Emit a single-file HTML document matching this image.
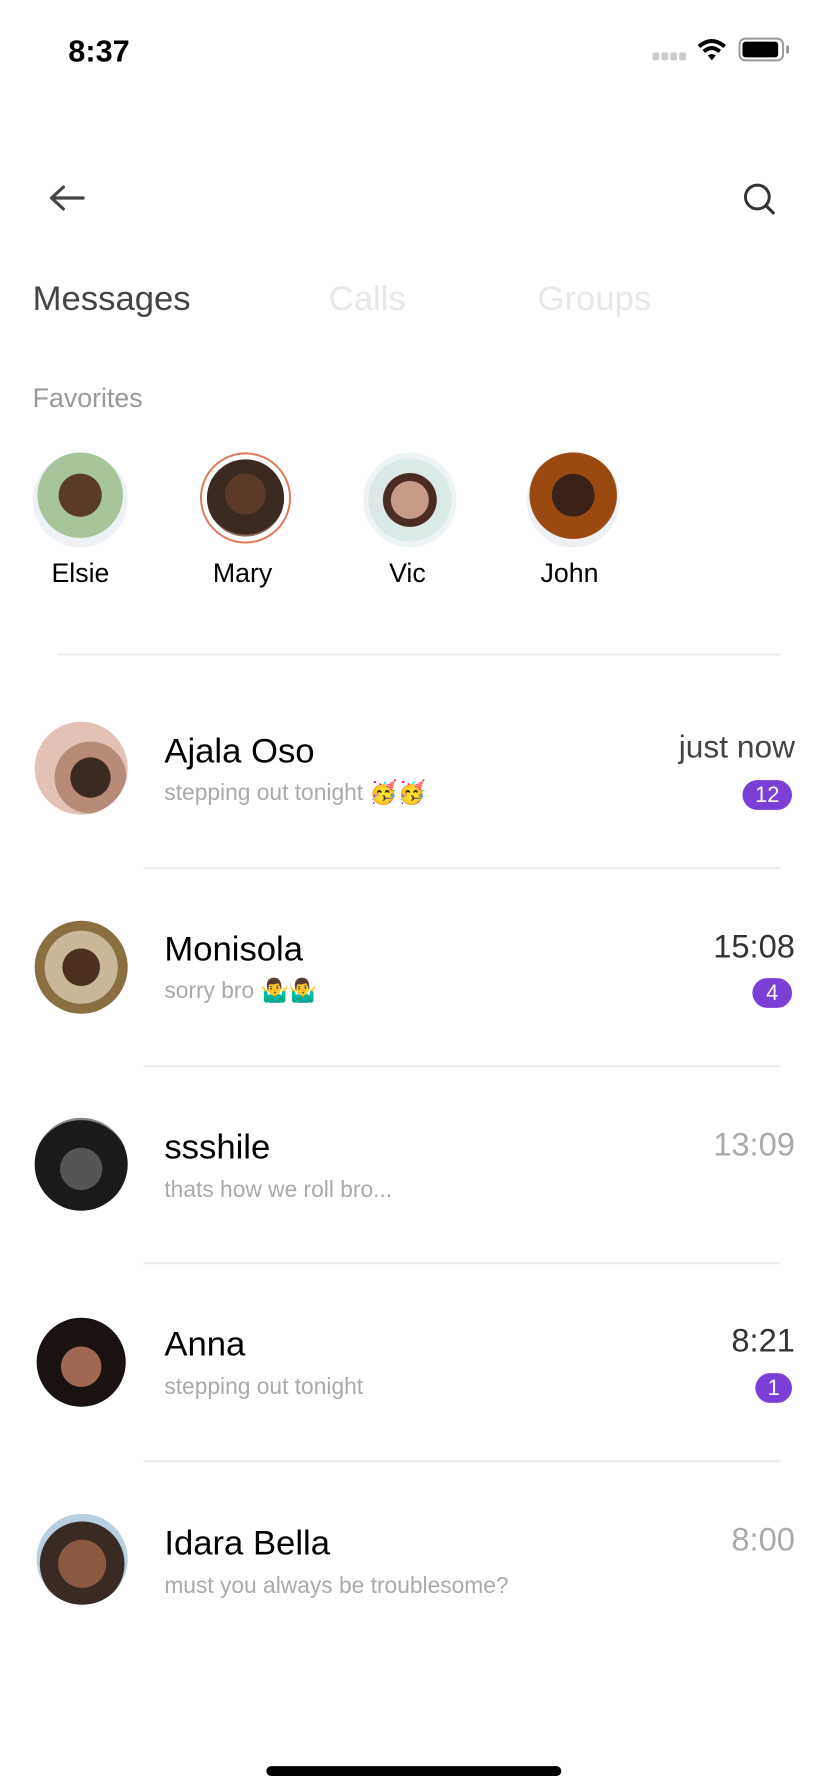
<!DOCTYPE html>
<html><head><meta charset="utf-8"><style>
*{margin:0;padding:0;box-sizing:border-box}
body{width:828px;height:1792px;background:#fff;font-family:"Liberation Sans","Noto Sans CJK SC",sans-serif;position:relative;overflow:hidden}
#w{position:absolute;left:0;top:0;width:828px;height:1792px;transform:scale(0.99);transform-origin:0 0}
.a{position:absolute}
.t{position:absolute;white-space:nowrap;line-height:1}
.av{position:absolute;border-radius:50%;overflow:hidden}
.sep{position:absolute;height:2px;background:#ececec}
.badge{position:absolute;height:30px;border-radius:15px;background:#7a3fd6;color:#fff;font-size:22px;line-height:30px;text-align:center}
</style></head><body><div id="w">
<div class="t" style="left:69px;top:36px;font-size:31px;font-weight:bold;color:#000">8:37</div>
<div class="a" style="left:659px;top:53px;width:36px;height:8px;display:flex;gap:2px">
<div style="width:7px;height:8px;background:#ccc;border-radius:2px"></div><div style="width:7px;height:8px;background:#ccc;border-radius:2px"></div><div style="width:7px;height:8px;background:#ccc;border-radius:2px"></div><div style="width:7px;height:8px;background:#ccc;border-radius:2px"></div></div>
<svg class="a" style="left:704px;top:38px" width="30" height="24" viewBox="0 0 30 24"><path d="M2 9 Q15 -2 28 9" stroke="#000" stroke-width="4" fill="none"/><path d="M7 14 Q15 7 23 14" stroke="#000" stroke-width="4" fill="none"/><path d="M11 18 L15 23 L19 18 Q15 15 11 18Z" fill="#000"/></svg>
<div class="a" style="left:746px;top:38px;width:46px;height:24px;border:2px solid #999;border-radius:7px"><div style="position:absolute;left:2px;top:2px;width:36px;height:16px;background:#000;border-radius:3px"></div></div>
<div class="a" style="left:794px;top:46px;width:3px;height:8px;background:#999;border-radius:1px"></div>
<svg class="a" style="left:48px;top:186px" width="38" height="28" viewBox="0 0 38 28"><path d="M36 14H5M16 3L4 14L16 25" stroke="#444" stroke-width="3.2" fill="none" stroke-linecap="round" stroke-linejoin="round"/></svg>
<svg class="a" style="left:748px;top:182px" width="38" height="38" viewBox="0 0 38 38"><circle cx="17" cy="17" r="12" stroke="#333" stroke-width="3" fill="none"/><path d="M26 26L33 33" stroke="#333" stroke-width="3.2" stroke-linecap="round"/></svg>
<div class="t" style="left:33px;top:284px;font-size:35px;color:#444">Messages</div>
<div class="t" style="left:332px;top:284px;font-size:35px;color:#e8e8e8">Calls</div>
<div class="t" style="left:543px;top:284px;font-size:35px;color:#e8e8e8">Groups</div>
<div class="t" style="left:33px;top:389px;font-size:27px;color:#999">Favorites</div>
<div class="av" style="left:33px;top:457px;width:96px;height:96px;background:radial-gradient(circle at 50% 45%,#5a3a28 0 30%,#a8c49a 31% 60%,#eef2f7 61%)"></div>
<div class="av" style="left:202px;top:457px;width:92px;height:92px;border:2px solid #e07a58;background:#fff"><div style="position:absolute;left:5px;top:5px;width:78px;height:78px;border-radius:50%;background:radial-gradient(circle at 50% 45%,#5b3a2a 0 35%,#3a2a22 36% 70%,#8a6a5a 71%)"></div></div>
<div class="av" style="left:367px;top:457px;width:94px;height:96px;background:radial-gradient(circle at 50% 50%,#c89a88 0 28%,#4a2c22 29% 40%,#dbe9e7 41% 62%,#eef4f6 63%)"></div>
<div class="av" style="left:532px;top:457px;width:94px;height:96px;background:radial-gradient(circle at 50% 45%,#3a2218 0 30%,#9a4a10 31% 62%,#eef0f4 63%)"></div>
<div class="t" style="left:52px;top:566px;font-size:27px;color:#000">Elsie</div>
<div class="t" style="left:215px;top:566px;font-size:27px;color:#000">Mary</div>
<div class="t" style="left:393px;top:566px;font-size:27px;color:#000">Vic</div>
<div class="t" style="left:546px;top:566px;font-size:27px;color:#000">John</div>
<div class="sep" style="left:58px;top:660px;width:730px"></div>

<div class="av" style="left:35px;top:729px;width:94px;height:94px;background:radial-gradient(circle at 60% 60%,#3a2a22 0 25%,#b88a78 26% 45%,#e2c2b6 46%)"></div>
<div class="t" style="left:166px;top:741px;font-size:35px;color:#000">Ajala Oso</div>
<div class="t" style="left:166px;top:789px;font-size:23px;color:#aaa">stepping out tonight 🥳🥳</div>
<div class="t" style="right:25px;top:738px;font-size:32px;color:#444">just now</div>
<div class="badge" style="left:750px;top:788px;width:50px">12</div>
<div class="sep" style="left:145px;top:876px;width:643px"></div>

<div class="av" style="left:35px;top:930px;width:94px;height:94px;background:radial-gradient(circle at 50% 50%,#4a3020 0 28%,#c8b898 29% 55%,#8a7040 56%)"></div>
<div class="t" style="left:166px;top:941px;font-size:35px;color:#000">Monisola</div>
<div class="t" style="left:166px;top:989px;font-size:23px;color:#aaa">sorry bro 🤷‍♂️🤷‍♂️</div>
<div class="t" style="right:25px;top:939px;font-size:33px;color:#333">15:08</div>
<div class="badge" style="left:760px;top:988px;width:40px">4</div>
<div class="sep" style="left:145px;top:1076px;width:643px"></div>

<div class="av" style="left:35px;top:1129px;width:94px;height:94px;background:radial-gradient(circle at 50% 55%,#555 0 30%,#1a1a1a 31% 70%,#888 71%)"></div>
<div class="t" style="left:166px;top:1141px;font-size:35px;color:#000">ssshile</div>
<div class="t" style="left:166px;top:1190px;font-size:23px;color:#aaa">thats how we roll bro...</div>
<div class="t" style="right:25px;top:1139px;font-size:33px;color:#aaa">13:09</div>
<div class="sep" style="left:145px;top:1275px;width:643px"></div>

<div class="av" style="left:37px;top:1331px;width:90px;height:90px;background:radial-gradient(circle at 50% 55%,#a06850 0 30%,#1a1210 31%)"></div>
<div class="t" style="left:166px;top:1340px;font-size:35px;color:#000">Anna</div>
<div class="t" style="left:166px;top:1389px;font-size:23px;color:#aaa">stepping out tonight</div>
<div class="t" style="right:25px;top:1337px;font-size:33px;color:#333">8:21</div>
<div class="badge" style="left:763px;top:1387px;width:37px">1</div>
<div class="sep" style="left:145px;top:1475px;width:643px"></div>

<div class="av" style="left:37px;top:1529px;width:92px;height:92px;background:radial-gradient(circle at 50% 55%,#8a5a40 0 35%,#3a2a24 36% 62%,#b8d0e0 63%)"></div>
<div class="t" style="left:166px;top:1541px;font-size:35px;color:#000">Idara Bella</div>
<div class="t" style="left:166px;top:1590px;font-size:23px;color:#aaa">must you always be troublesome?</div>
<div class="t" style="right:25px;top:1538px;font-size:33px;color:#aaa">8:00</div>

<div class="a" style="left:269px;top:1784px;width:298px;height:10px;background:#000;border-radius:5px"></div>
</div></body></html>
